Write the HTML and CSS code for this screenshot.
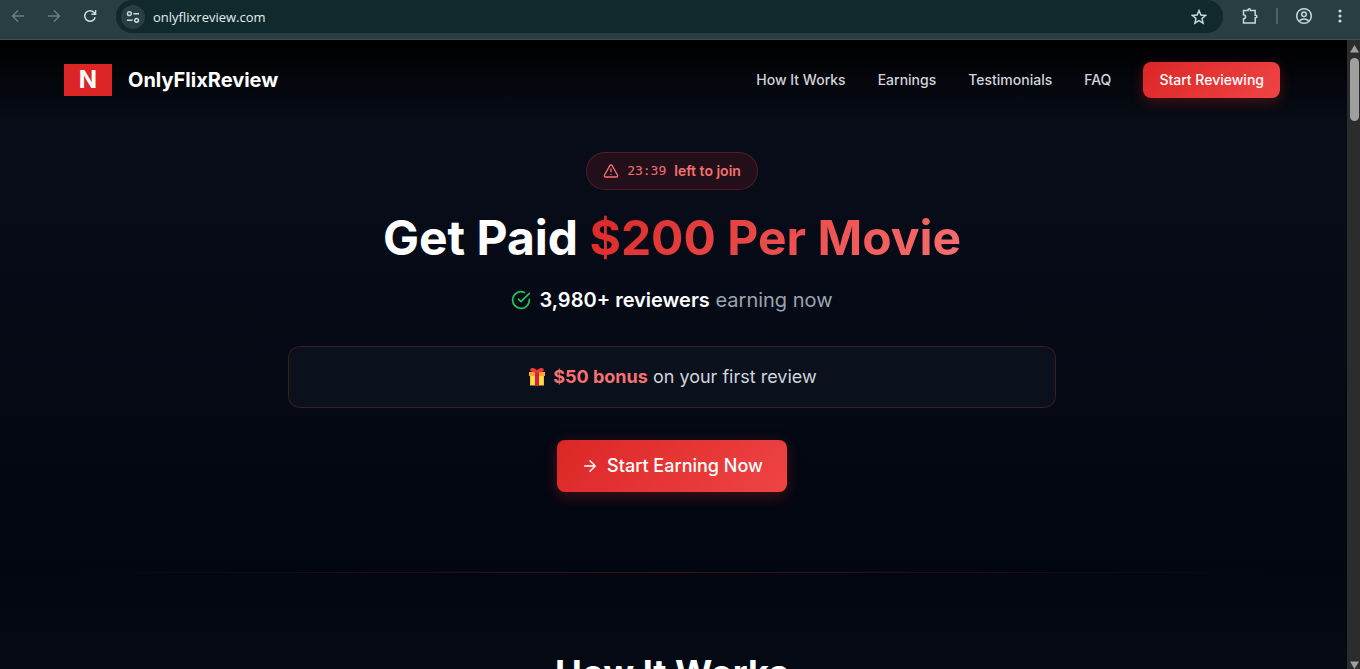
FILE: index.html
```html
<!DOCTYPE html>
<html lang="en">
<head>
    <meta charset="UTF-8">
    <meta name="viewport" content="width=device-width, initial-scale=1.0">
    <title>OnlyFlixReview</title>
    <link rel="stylesheet" href="styles.css">
</head>
<body>
    <!-- Browser toolbar -->
    <div class="toolbar">
        <button type="button" class="tool-button disabled" aria-label="Back">
            <svg width="16" height="16" viewBox="0 0 16 16"><path d="M14 8H3M8 2.5 2.5 8 8 13.5"/></svg>
        </button>
        <button type="button" class="tool-button disabled" aria-label="Forward">
            <svg width="16" height="16" viewBox="0 0 16 16"><path d="M2 8h11M8 2.5 13.5 8 8 13.5"/></svg>
        </button>
        <button type="button" class="tool-button" aria-label="Reload">
            <svg width="16" height="16" viewBox="0 0 16 16"><path d="M13.2 9.2A5.3 5.3 0 1 1 12 4.4l1.4 1.5M13.6 2v4.2H9.4"/></svg>
        </button>
        <div class="address-bar">
            <button type="button" class="site-info" aria-label="Site information">
                <svg width="14" height="14" viewBox="0 0 14 14"><circle cx="3.4" cy="3.7" r="1.9"/><path d="M7.4 3.7H13M1 10.3h5.6"/><circle cx="10.6" cy="10.3" r="1.9"/></svg>
            </button>
            <input type="text" class="address" aria-label="Address" value="onlyflixreview.com">
            <button type="button" class="tool-button" aria-label="Bookmark">
                <svg width="16" height="16" viewBox="0 0 16 16"><path d="M8 1.6 9.9 6l4.7.4-3.6 3.1 1.1 4.6L8 11.700l-4.100 2.400L5 9.500 1.400 6.400 6.100 6z"/></svg>
            </button>
        </div>
        <div class="toolbar-right">
            <button type="button" class="tool-button" aria-label="Extensions">
                <svg width="18" height="18" viewBox="0 0 18 18"><path d="M2.500 3.500H7V3a1.200 1.200 0 0 1 2.400 0v.5h4.800v4.800h.5a1.200 1.200 0 0 1 0 2.400h-.5v5.300H2.500v-4.200a2 2 0 0 0 0-4z"/></svg>
            </button>
            <span class="separator"></span>
            <button type="button" class="tool-button" aria-label="Profile">
                <svg width="18" height="18" viewBox="0 0 18 18"><circle cx="9" cy="9" r="7.3"/><circle cx="9" cy="7.2" r="2.3"/><path d="M4.2 14c2.600-2.600 7-2.600 9.600 0"/></svg>
            </button>
            <button type="button" class="tool-button" aria-label="Menu">
                <svg class="dots" width="16" height="16" viewBox="0 0 16 16"><circle cx="8" cy="3" r="1.6"/><circle cx="8" cy="8" r="1.6"/><circle cx="8" cy="13" r="1.6"/></svg>
            </button>
        </div>
    </div>

    <div class="window">
        <div class="page">
            <!-- Header -->
            <header class="header">
                <a href="#" class="brand">
                    <span class="brand-mark">N</span>
                    <span class="brand-name">OnlyFlixReview</span>
                </a>
                <nav class="nav">
                    <a href="#how">How It Works</a>
                    <a href="#earnings">Earnings</a>
                    <a href="#testimonials">Testimonials</a>
                    <a href="#faq">FAQ</a>
                    <button type="button" class="button nav-button">Start Reviewing</button>
                </nav>
            </header>

            <!-- Hero -->
            <main>
                <section class="hero">
                    <div class="timer">
                        <svg width="16" height="16" viewBox="0 0 24 24"><path d="m21.7 18-8-14a2 2 0 0 0-3.4 0l-8 14A2 2 0 0 0 4 21h16a2 2 0 0 0 1.7-3M12 9v4M12 17h.01"/></svg>
                        <span class="timer-value">23:39</span>
                        <span>left to join</span>
                    </div>
                    <h1>Get Paid <span class="highlight">$200 Per Movie</span></h1>
                    <p class="reviewers">
                        <svg width="20" height="20" viewBox="0 0 24 24"><path d="M22 11.1V12a10 10 0 1 1-5.9-9.1"/><path d="m9 11 3 3L22 4"/></svg>
                        <span><strong>3,980+ reviewers</strong> earning now</span>
                    </p>
                    <div class="bonus">
                        <svg width="20" height="20" viewBox="0 0 20 20">
                            <path fill="#fbc02d" d="M3 8h14v10.5H3z"/>
                            <path fill="#ffdf42" d="M4 9h12v9H4z"/>
                            <path fill="#ffa726" d="M2 5h16v4H2z"/>
                            <path fill="#d81b4f" d="M8 4h4v14.5H8z"/>
                            <path fill="#f13a35" d="M10 3.500C8.500.5 4 .2 3.300 2.200 2.600 4.200 5 5.400 10 5.400s7.400-1.200 6.700-3.200C16 .2 11.500.5 10 3.500"/>
                        </svg>
                        <p><strong>$50 bonus</strong> on your first review</p>
                    </div>
                    <button type="button" class="button hero-button">
                        <svg width="18" height="18" viewBox="0 0 24 24"><path d="M5 12h14M12 5l7 7-7 7"/></svg>
                        Start Earning Now
                    </button>
                </section>

                <section class="how" id="how">
                    <h2>How It Works</h2>
                </section>
            </main>
        </div>

        <!-- Scrollbar -->
        <div class="scrollbar">
            <svg width="9" height="8" viewBox="0 0 9 8"><path d="M4.5 0 9 7.500H0z"/></svg>
            <div class="thumb"></div>
            <svg width="9" height="8" viewBox="0 0 9 8"><path d="M0 .5h9L4.500 8z"/></svg>
        </div>
    </div>
</body>
</html>
```

FILE: styles.css
```css
:root {
    --red: #dc2626;
    --red-light: #ef4444;
    --red-soft: #f87171;
    --toolbar: #283e42;
    --address: #10292c;
    --icon: #c3d9dc;
}

* {
    box-sizing: border-box;
    margin: 0;
    padding: 0;
}

body {
    height: 100vh;
    display: flex;
    flex-direction: column;
    overflow: hidden;
    background: #030712;
    color: #fff;
    font-family: Inter, sans-serif;
}

button {
    border: none;
    background: none;
    color: inherit;
    font: inherit;
    cursor: pointer;
}

a {
    color: inherit;
    text-decoration: none;
}

svg {
    display: block;
    flex: none;
    fill: none;
    stroke: currentColor;
    stroke-width: 2;
    stroke-linecap: round;
    stroke-linejoin: round;
}

/* Browser toolbar */
.toolbar {
    flex: none;
    display: flex;
    align-items: flex-start;
    height: 40px;
    padding-right: 2px;
    background: var(--toolbar);
    border-bottom: 1px solid #3b5054;
    color: var(--icon);
}

.tool-button {
    display: flex;
    align-items: center;
    justify-content: center;
    width: 36px;
    height: 32px;
}

.tool-button svg,
.site-info svg {
    stroke-width: 1.5;
    stroke-linecap: butt;
    stroke-linejoin: miter;
}

.disabled {
    color: #6b7d80;
}

.address-bar {
    flex: 1;
    display: flex;
    align-items: center;
    height: 33px;
    margin-left: 8px;
    padding: 0 6px 0 5px;
    background: var(--address);
    border-radius: 16px;
}

.site-info {
    display: flex;
    align-items: center;
    justify-content: center;
    width: 24px;
    height: 24px;
    border-radius: 50%;
    background: var(--toolbar);
}

.address {
    flex: 1;
    margin-left: 8px;
    border: none;
    outline: none;
    background: none;
    color: #e3eeef;
    font: 13px "Open Sans", sans-serif;
}

.toolbar-right {
    display: flex;
    align-items: center;
    margin-left: 9px;
}

.separator {
    width: 2px;
    height: 16px;
    margin: 0 8px;
    background: #46646a;
}

.toolbar-right .dots {
    fill: currentColor;
    stroke: none;
}

/* Page */
.window {
    flex: 1;
    display: flex;
    min-height: 0;
}

.page {
    flex: 1;
    overflow: hidden;
    padding-right: 3px;
    background: linear-gradient(#000 0, #080d19 88px, #020611 530px, #050a15 100%);
}

.header {
    display: flex;
    align-items: center;
    justify-content: space-between;
    height: 80px;
    padding: 0 64px;
}

.brand {
    display: flex;
    align-items: center;
    gap: 16px;
}

.brand-mark {
    width: 48px;
    background: var(--red);
    font-size: 24px;
    line-height: 32px;
    font-weight: 700;
    text-align: center;
}

.brand-name {
    font-size: 20px;
    font-weight: 700;
}

.nav {
    display: flex;
    align-items: center;
    gap: 32px;
    color: #d1d5db;
    font-size: 14px;
    line-height: 20px;
    font-weight: 500;
}

.button {
    display: flex;
    align-items: center;
    border-radius: 8px;
    background: linear-gradient(135deg, var(--red), var(--red-light));
    box-shadow: 0 4px 14px rgba(220, 38, 38, 0.3);
    color: #fff;
}

.nav-button {
    height: 36px;
    padding: 0 16px;
}

.hero {
    display: flex;
    flex-direction: column;
    align-items: center;
    margin: 0 64px;
    padding: 32px 0 80px;
    border-bottom: 1px solid;
    border-image: linear-gradient(90deg, transparent, rgba(220, 38, 38, 0.3), transparent) 1;
}

.timer {
    display: flex;
    align-items: center;
    gap: 8px;
    padding: 8px 16px;
    border: 1px solid rgba(239, 68, 68, 0.25);
    border-radius: 20px;
    background: rgba(220, 38, 38, 0.13);
    color: var(--red-soft);
    font-size: 14px;
    line-height: 20px;
    font-weight: 600;
}

.timer-value {
    font-family: "DejaVu Sans Mono", monospace;
    font-size: 13px;
    font-weight: 400;
}

h1 {
    margin-top: 18px;
    font-size: 48px;
    line-height: 60px;
    font-weight: 700;
}

.highlight {
    background: linear-gradient(135deg, var(--red), var(--red-soft));
    background-clip: text;
    color: transparent;
}

.reviewers {
    display: flex;
    align-items: center;
    gap: 8px;
    margin-top: 18px;
    color: #9ca3af;
    font-size: 20px;
    line-height: 28px;
}

.reviewers svg {
    color: #22c55e;
}

.reviewers strong {
    color: #fff;
    font-weight: 600;
}

.bonus {
    display: flex;
    align-items: center;
    justify-content: center;
    gap: 6px;
    width: 100%;
    max-width: 768px;
    margin: 32px 0;
    padding: 16px;
    border: 1px solid rgba(239, 68, 68, 0.22);
    border-radius: 12px;
    background: #0a101c;
    color: #d1d5db;
    font-size: 18px;
    line-height: 28px;
}

.bonus svg {
    stroke: none;
}

.bonus strong {
    color: var(--red-soft);
    font-weight: 700;
}

.hero-button {
    gap: 8px;
    height: 52px;
    padding: 0 24px;
    font-size: 18px;
    line-height: 28px;
    font-weight: 500;
}

.how {
    padding: 80px 64px;
    text-align: center;
}

h2 {
    font-size: 36px;
    line-height: 40px;
    font-weight: 700;
}

/* Scrollbar */
.scrollbar {
    display: flex;
    flex-direction: column;
    align-items: center;
    width: 13px;
    padding-top: 5px;
    padding-left: 2px;
    background: #2c2c2c;
    color: #9f9f9f;
}

.scrollbar svg {
    fill: currentColor;
    stroke: none;
}

.scrollbar svg:last-child {
    margin-top: auto;
}

.thumb {
    width: 9px;
    height: 63px;
    margin-top: 5px;
    border-radius: 5px;
    background: currentColor;
}
```
